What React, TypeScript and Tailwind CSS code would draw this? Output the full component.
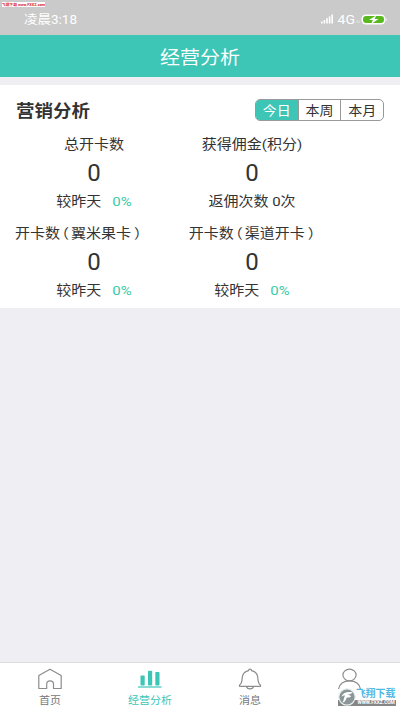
import type { ReactNode } from "react";
import clsx from "clsx";

// Wide, slightly flattened lettering used across the whole screen
function Txt({ className, children }: { className?: string; children: ReactNode }) {
  return <span className={clsx("inline-block scale-y-[0.9] whitespace-pre", className)}>{children}</span>;
}

function StatusBar() {
  return (
    <div className="relative h-[35px] bg-[#cacaca] text-white">
      <div className="absolute left-0.5 top-0.5 flex h-[5px] w-[43px] items-center justify-center overflow-hidden bg-white">
        <span className="scale-[0.48] whitespace-nowrap text-[8px] font-bold leading-none text-[#d5222f]">
          飞翔下载 www.FXXZ.com
        </span>
      </div>
      <div className="flex h-[38px] items-center justify-between pl-6 pr-[13px]">
        <Txt className="pt-px text-[13.5px] leading-none">凌晨3:18</Txt>
        <div className="flex items-center">
          <svg width="13" height="10" viewBox="0 0 13 10" fill="#fff">
            <rect x="0" y="7.5" width="1.6" height="2" />
            <rect x="2.6" y="6" width="1.6" height="3.5" />
            <rect x="5.2" y="4.2" width="1.6" height="5.3" />
            <rect x="7.8" y="2.4" width="1.6" height="7.1" />
            <rect x="10.4" y="0.5" width="1.6" height="9" />
          </svg>
          <Txt className="ml-1 text-[14px] leading-none">4G</Txt>
          <svg width="6" height="10" viewBox="0 0 6 10" stroke="#fff" strokeOpacity="0.6" strokeWidth="0.8">
            <path d="M2 6.500v2.500M4 6.500v2.500" />
          </svg>
          <svg width="26" height="11" viewBox="0 0 26 11">
            <rect x="0.5" y="0.5" width="24" height="10" rx="4.5" fill="#fff" />
            <rect x="2" y="2" width="21" height="7" rx="3.2" fill="#57b91d" />
            <path d="M25 3.8q1.2 1.7 0 3.4z" fill="#fff" />
            <path d="M15.3 1.2 8.1 6h3.8l-1.8 4 7.4-5h-3.8z" fill="#fff" />
          </svg>
        </div>
      </div>
    </div>
  );
}

const periods = ["今日", "本周", "本月"];

function PeriodSwitch() {
  return (
    <div className="flex h-[22px] w-[129px] overflow-hidden rounded-[5px] border border-[#999]">
      {periods.map((p, i) => (
        <button
          key={p}
          type="button"
          className={clsx(
            "flex flex-1 items-center justify-center pt-px text-[14px] leading-none",
            i === 0 ? "bg-[#3dc5b6] text-white" : "border-l border-[#999]",
          )}
        >
          <Txt>{p}</Txt>
        </button>
      ))}
    </div>
  );
}

function Stat({
  title,
  footer,
  titleClass,
}: {
  title: ReactNode;
  footer: ReactNode;
  titleClass?: string;
}) {
  return (
    <div className="flex flex-col items-center text-[15px]">
      <Txt className={clsx("h-5 leading-5", titleClass)}>{title}</Txt>
      <span className="mt-[3px] h-8 text-[24px] leading-8">0</span>
      <Txt className="mt-0.5 h-5 leading-5">{footer}</Txt>
    </div>
  );
}

function Compare() {
  return (
    <>
      较昨天<span className="ml-[11px] text-[#3ccba8]">0%</span>
    </>
  );
}

function CardTitle({ kind }: { kind: string }) {
  return (
    <span className="[font-feature-settings:'halt']">
      开卡数<span className="ml-[1.5px] mr-0.5">（</span>
      {kind}
      <span className="ml-[3px]">）</span>
    </span>
  );
}

function HomeIcon() {
  return (
    <svg width="26" height="22" viewBox="0 0 26 22" fill="none" stroke="#8c8c8c" strokeWidth="1.2" strokeLinejoin="round">
      <path d="M1.8 7.600 13 1.200l11.200 6.400v12.900h-7.700V16.200a3.400 3.400 0 0 0-6.800 0v4.300H1.800z" />
    </svg>
  );
}

function ChartIcon() {
  return (
    <svg width="26" height="22" viewBox="0 0 26 22" fill="#3dc5b6">
      <rect x="3.500" y="7.500" width="4.200" height="10" rx="0.800" />
      <rect x="11" y="2.800" width="4.200" height="14.700" rx="0.800" />
      <rect x="18.300" y="4" width="4.200" height="13.500" rx="0.800" />
      <rect x="1" y="18.400" width="23.500" height="1.200" />
    </svg>
  );
}

function BellIcon() {
  return (
    <svg width="26" height="22" viewBox="0 0 26 22" fill="none" stroke="#8c8c8c" strokeWidth="1.2" strokeLinejoin="round">
      <path d="M13 1.200c-.9 0-1.400.6-1.500 1.400C7.400 3.500 5.400 6.300 5.200 10c-.2 4-.6 6-2.700 7v1.300h21V17c-2.100-1-2.500-3-2.700-7-.2-3.700-2.200-6.500-6.300-7.400-.1-.8-.6-1.400-1.500-1.400z" />
      <path d="M9.500 18.400c.5 3.200 6.500 3.200 7 0" />
    </svg>
  );
}

function UserIcon() {
  return (
    <svg width="26" height="22" viewBox="0 0 26 22" fill="none" stroke="#8c8c8c" strokeWidth="1.2">
      <ellipse cx="12.500" cy="7" rx="6.600" ry="5.800" />
      <path d="M1.600 21c.6-5 5-8.200 10.900-8.200S22.800 16 23.400 21" />
    </svg>
  );
}

const tabs = [
  { label: "首页", icon: <HomeIcon /> },
  { label: "经营分析", icon: <ChartIcon />, active: true },
  { label: "消息", icon: <BellIcon /> },
  { label: "", icon: <UserIcon /> },
];

function TabBar() {
  return (
    <nav className="flex h-[49px] border-t border-[#dcdce0] bg-white">
      {tabs.map((t, i) => (
        <div
          key={i}
          className={clsx(
            "flex flex-1 flex-col items-center pt-[5px] text-[11px] leading-4",
            t.active ? "text-[#3dc5b6]" : "text-[#777]",
          )}
        >
          {t.icon}
          {t.label && <Txt className="mt-[3px]">{t.label}</Txt>}
        </div>
      ))}
    </nav>
  );
}

function Watermark() {
  return (
    <div className="absolute bottom-[5px] right-1 flex h-[18px] w-[58px]">
      <svg className="shrink-0" width="18" height="18" viewBox="0 0 18 18">
        <rect y="12" width="18" height="6" fill="#858585" />
        <circle cx="9" cy="9" r="8.200" fill="#8b9698" stroke="#e8eeee" strokeWidth="1.200" />
        <path d="M3.500 8.500C5 4.500 9 3.500 14.500 4c-1 2-3 2.500-5.500 2.700C12 7 13 7.500 13 8.500c-1.500 1.200-3 1-4.500 1.200C8 12 7 14 4.500 14.500 6 12 6 9.500 7 7.500 5.500 7.500 4.500 8 3.500 8.500z" fill="#fff" />
      </svg>
      <div className="flex min-w-0 flex-1 flex-col">
        <span className="h-3 whitespace-nowrap text-[9.800px] font-bold leading-3 text-[#4fb9e3]">飞翔下载</span>
        <div className="flex h-1.5 items-center justify-center bg-[#858585]">
          <span className="scale-[0.6] whitespace-nowrap text-[8px] font-bold leading-none text-white">WWW.FXXZ.COM</span>
        </div>
      </div>
    </div>
  );
}

export default function App() {
  return (
    <div className="relative flex h-[711px] w-[400px] flex-col overflow-hidden bg-[#eeeef3] font-['Roboto','Noto_Sans_CJK_SC',sans-serif] text-[#333]">
      <StatusBar />
      <header className="flex h-[42px] items-center justify-center bg-[#3dc5b6] pt-[3px] text-[20px] leading-none text-white">
        <Txt>经营分析</Txt>
      </header>
      <main className="mt-2 h-[223px] bg-white pt-3.5">
        <div className="flex h-[22px] items-center justify-between pl-4 pr-4">
          <Txt className="pt-1 text-[18.500px] font-bold leading-none">营销分析</Txt>
          <PeriodSwitch />
        </div>
        <div className="mt-[13px] grid grid-cols-[158px_158px] gap-y-3 pl-[15px]">
          <Stat title="总开卡数" footer={<Compare />} />
          <Stat title="获得佣金(积分)" footer="返佣次数 0次" />
          <Stat title={<CardTitle kind="翼米果卡" />} titleClass="self-start" footer={<Compare />} />
          <Stat title={<CardTitle kind="渠道开卡" />} footer={<Compare />} />
        </div>
      </main>
      <div className="flex-1" />
      <TabBar />
      <Watermark />
    </div>
  );
}
